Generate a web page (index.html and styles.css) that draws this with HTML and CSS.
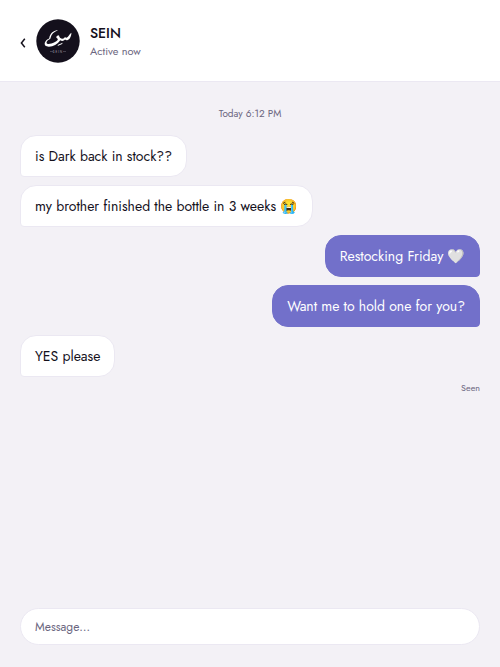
FILE: index.html
```html
<!DOCTYPE html>
<html lang="en">
<head>
<meta charset="utf-8">
<meta name="viewport" content="width=device-width, initial-scale=1">
<title>SEIN</title>
<link rel="stylesheet" href="styles.css">
</head>
<body>
<header class="header">
  <button class="back" type="button" aria-label="Back"><svg width="6" height="10" viewBox="0 0 6 10"><path d="M4.8 .8 1.4 5l3.4 4.2"/></svg></button>
  <svg class="avatar" viewBox="0 0 44 44" aria-hidden="true">
    <circle cx="22" cy="22" r="21.7" fill="#14101c"/>
    <path fill="#fff" d="M21.500 11.400C18 12.600 15.300 15.500 14.800 18.200C14.600 19.400 14.200 20 13 20.600C11.300 21.500 10.300 22.900 10.600 24C11.200 25.600 15 25 18.500 23.300C21.300 21.900 22.600 20.600 21.400 19.400C20.500 18.500 19.800 18.300 20.500 17.400C21.300 16.600 22 16.400 23 16.200C23 18 24.500 19.600 26.500 19.700C28.200 19.700 28.500 18.800 29 17.800C29.600 19 30.600 18.900 31.900 17.800C33.200 16.500 33.500 14.900 35.400 13.700C35.400 16.500 34.300 20 31.800 21C30.600 21.500 29.700 21.200 29.100 20.600C27.700 22.300 25.500 22.300 24.300 21.200C21.500 25.300 17.200 27.500 13 27.700C9.800 27.800 8.300 26.400 8.700 24.100C9.200 21.800 11 20.400 13.200 19.400C13.400 17.500 14.500 14.800 16 13.600C17.500 12.300 19.300 11.500 21.500 11Z"/>
    <path d="m21.800 26.400 4.600-2" stroke="#fff" stroke-width="1"/>
    <path d="M14 32.500h3M27 32.500h3" stroke="#77727f" stroke-width=".5"/>
    <text class="mark" x="22" y="33.600" text-anchor="middle">SEIN</text>
  </svg>
  <div class="who">
    <h1 class="name">SEIN</h1>
    <p class="status">Active now</p>
  </div>
</header>
<main class="chat">
  <p class="time">Today 6:12 PM</p>
  <p class="msg">is Dark back in stock??</p>
  <p class="msg">my brother finished the bottle in 3 weeks 😭</p>
  <p class="msg sent">Restocking Friday 🤍</p>
  <p class="msg sent">Want me to hold one for you?</p>
  <p class="msg">YES please</p>
  <p class="seen">Seen</p>
</main>
<form class="composer">
  <input class="field" type="text" placeholder="Message…" aria-label="Message">
</form>
</body>
</html>
```
FILE: styles.css
```css
* { box-sizing: border-box; }
body {
  margin: 0;
  min-height: 100vh;
  display: flex;
  flex-direction: column;
  background: #f3f1f6;
  color: #14101c;
  font-family: Jost, Lato, "Noto Color Emoji", sans-serif;
}
h1, p { margin: 0; }
.header {
  display: flex;
  align-items: center;
  gap: 10px;
  padding: 19px 20px 18px;
  background: #fff;
  border-bottom: 1px solid #ebe8f2;
}
.back {
  display: flex;
  padding: 3px 0 0;
  border: 0;
  background: none;
}
.back path {
  fill: none;
  stroke: #14101c;
  stroke-width: 1.5;
}
.avatar { width: 44px; height: 44px; }
.mark { font-size: 3px; letter-spacing: 1px; fill: #aaa6b2; }
.name {
  font-size: 14px;
  line-height: 20px;
  font-weight: 500;
}
.status {
  font-size: 11px;
  line-height: 16px;
  color: #6b6680;
}
.chat {
  flex: 1;
  display: flex;
  flex-direction: column;
  align-items: flex-start;
  gap: 8px;
  padding: 24px 20px;
}
.time {
  align-self: center;
  margin-bottom: 5px;
  font-size: 10px;
  line-height: 16px;
  color: #6b6680;
}
.msg {
  padding: 10px 14px;
  background: #fff;
  border: 1px solid #ebe8f2;
  border-radius: 16px 16px 16px 4px;
  font-size: 14px;
  line-height: 20px;
}
.sent {
  align-self: flex-end;
  background: #7270ca;
  border-color: #7270ca;
  border-radius: 16px 16px 4px 16px;
  color: #fff;
}
.seen {
  align-self: flex-end;
  font-size: 9px;
  line-height: 6px;
  color: #6b6680;
}
.composer { padding: 0 20px 22px; }
.field {
  display: block;
  width: 100%;
  height: 37px;
  padding: 0 14px;
  border: 1px solid #ebe8f2;
  border-radius: 20px;
  background: #fff;
  font: inherit;
  font-size: 12px;
  color: #14101c;
}
.field::placeholder { color: #6b6680; opacity: 1; }
```
